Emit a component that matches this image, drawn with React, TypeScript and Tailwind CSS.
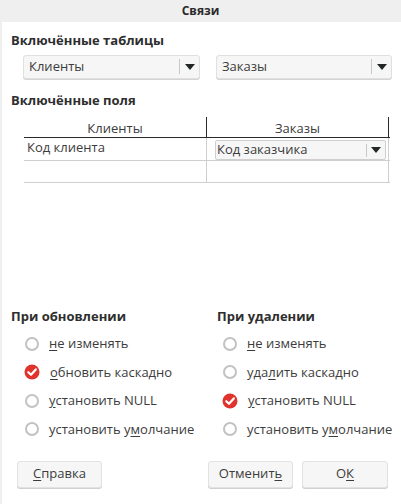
import React from 'react';

const font = { fontFamily: '"Open Sans", "Noto Sans", sans-serif' };

function Arrow() {
  return (
    <svg width="10" height="6" viewBox="0 0 10 6" className="shrink-0">
      <path d="M0 0 L10 0 L5 6 Z" fill="#232627" />
    </svg>
  );
}

function Combo({ label, className }: { label: string; className?: string }) {
  return (
    <div
      className={
        'flex h-[24px] items-center rounded-[3px] border border-[#e0e0e0] bg-[#f6f6f6] shadow-[0_1px_0_#d4d4d4] ' +
        (className ?? '')
      }
    >
      <span className="flex-1 pl-[5px] text-[13px] text-[#3c3c3c]">{label}</span>
      <div className="h-[15px] w-px bg-[#c8c8c8]" />
      <div className="flex w-[19px] justify-center">
        <Arrow />
      </div>
    </div>
  );
}

function U({ children }: { children: React.ReactNode }) {
  return <span className="underline underline-offset-2">{children}</span>;
}

function Radio({ checked, children }: { checked?: boolean; children: React.ReactNode }) {
  return (
    <div className="flex h-[28.5px] items-center whitespace-nowrap">
      {checked ? (
        <svg width="16" height="16" viewBox="0 0 16 16" className="mr-[10px] ml-[-1px] shrink-0">
          <circle cx="8" cy="8" r="7.5" fill="#e0332b" />
          <path d="M4.3 8.2 L7 10.8 L11.8 5.4" fill="none" stroke="#fff" strokeWidth="2.2" strokeLinecap="round" strokeLinejoin="round" />
        </svg>
      ) : (
        <div className="mr-[10px] h-[14px] w-[14px] shrink-0 rounded-full border-2 border-[#c2c2c2] bg-white" />
      )}
      <span className="text-[13px] text-[#3c3c3c]">{children}</span>
    </div>
  );
}

function Button({ children, className }: { children: React.ReactNode; className?: string }) {
  return (
    <div
      className={
        'flex h-[27px] items-center justify-center rounded-[3px] border border-[#e2e2e2] bg-[#f6f6f6] text-[13px] text-[#3c3c3c] shadow-[0_1px_0_#d0d0d0] ' +
        (className ?? '')
      }
    >
      {children}
    </div>
  );
}

export default function App() {
  return (
    <div className="flex h-[504px] w-[401px] flex-col bg-[#efefef]" style={font}>
      <div className="flex h-[22px] items-center justify-center text-[12px] font-bold text-[#2a2a2a]">
        Связи
      </div>
      <div className="ml-[2px] flex flex-1 flex-col bg-white pl-[9px] pr-[9px]">
        <div className="mt-[9px] text-[13px] font-bold text-[#2e2e2e]">Включённые таблицы</div>
        <div className="mt-[4px] flex gap-[16px] pl-[12px]">
          <Combo label="Клиенты" className="w-[177px]" />
          <Combo label="Заказы" className="w-[176px]" />
        </div>

        <div className="mt-[12px] text-[13px] font-bold text-[#2e2e2e]">Включённые поля</div>
        <div className="ml-[13px] mt-[7px] w-[366px]">
          <div className="grid h-[21px] grid-cols-[183px_182px] border-b border-[#2a2a2a]">
            <div className="flex items-center justify-center border-r border-[#2a2a2a] pt-[2px] text-[13px] text-[#3c3c3c]">
              Клиенты
            </div>
            <div className="flex items-center justify-center border-r border-[#2a2a2a] pt-[2px] text-[13px] text-[#3c3c3c]">
              Заказы
            </div>
          </div>
          <div className="grid h-[23px] grid-cols-[183px_182px] border-b border-[#cfcfcf]">
            <div className="flex items-center border-r border-[#cfcfcf] pb-[2px] pl-[3px] text-[13px] text-[#3c3c3c]">
              Код клиента
            </div>
            <div className="flex items-end border-r border-[#cfcfcf] pl-[8px] pr-[2px]">
              <div className="flex h-[20px] w-[172px] items-center rounded-[2px] border border-[#cfcfcf] bg-[#f6f6f6]">
                <span className="flex-1 pl-[1px] text-[13px] text-[#3c3c3c]">Код заказчика</span>
                <div className="h-[13px] w-px bg-[#c8c8c8]" />
                <div className="flex w-[18px] justify-center">
                  <Arrow />
                </div>
              </div>
            </div>
          </div>
          <div className="grid h-[22px] grid-cols-[183px_182px] border-b border-[#cfcfcf]">
            <div className="border-r border-[#cfcfcf]" />
            <div className="border-r border-[#cfcfcf]" />
          </div>
        </div>

        <div className="mt-[124px] grid grid-cols-[206px_1fr]">
          <div>
            <div className="text-[13px] font-bold text-[#2e2e2e]">При обновлении</div>
            <div className="mt-[3px] pl-[14px]">
              <Radio>
                <U>н</U>е изменять
              </Radio>
              <Radio checked>
                <U>о</U>бновить каскадно
              </Radio>
              <Radio>
                <U>у</U>становить NULL
              </Radio>
              <Radio>
                установить у<U>м</U>олчание
              </Radio>
            </div>
          </div>
          <div>
            <div className="text-[13px] font-bold text-[#2e2e2e]">При удалении</div>
            <div className="mt-[3px] pl-[6px]">
              <Radio>
                <U>н</U>е изменять
              </Radio>
              <Radio>
                уда<U>л</U>ить каскадно
              </Radio>
              <Radio checked>
                <U>у</U>становить NULL
              </Radio>
              <Radio>
                установить у<U>м</U>олчание
              </Radio>
            </div>
          </div>
        </div>

        <div className="mt-[17px] flex pl-[6px]">
          <Button className="w-[85px]">
            <U>С</U>правка
          </Button>
          <div className="flex-1" />
          <Button className="w-[85px]">
            Отмени<span>т</span>
            <U>ь</U>
          </Button>
          <Button className="ml-[9px] w-[86px]">
            О<U>К</U>
          </Button>
          <div className="w-[4px]" />
        </div>
      </div>
    </div>
  );
}
